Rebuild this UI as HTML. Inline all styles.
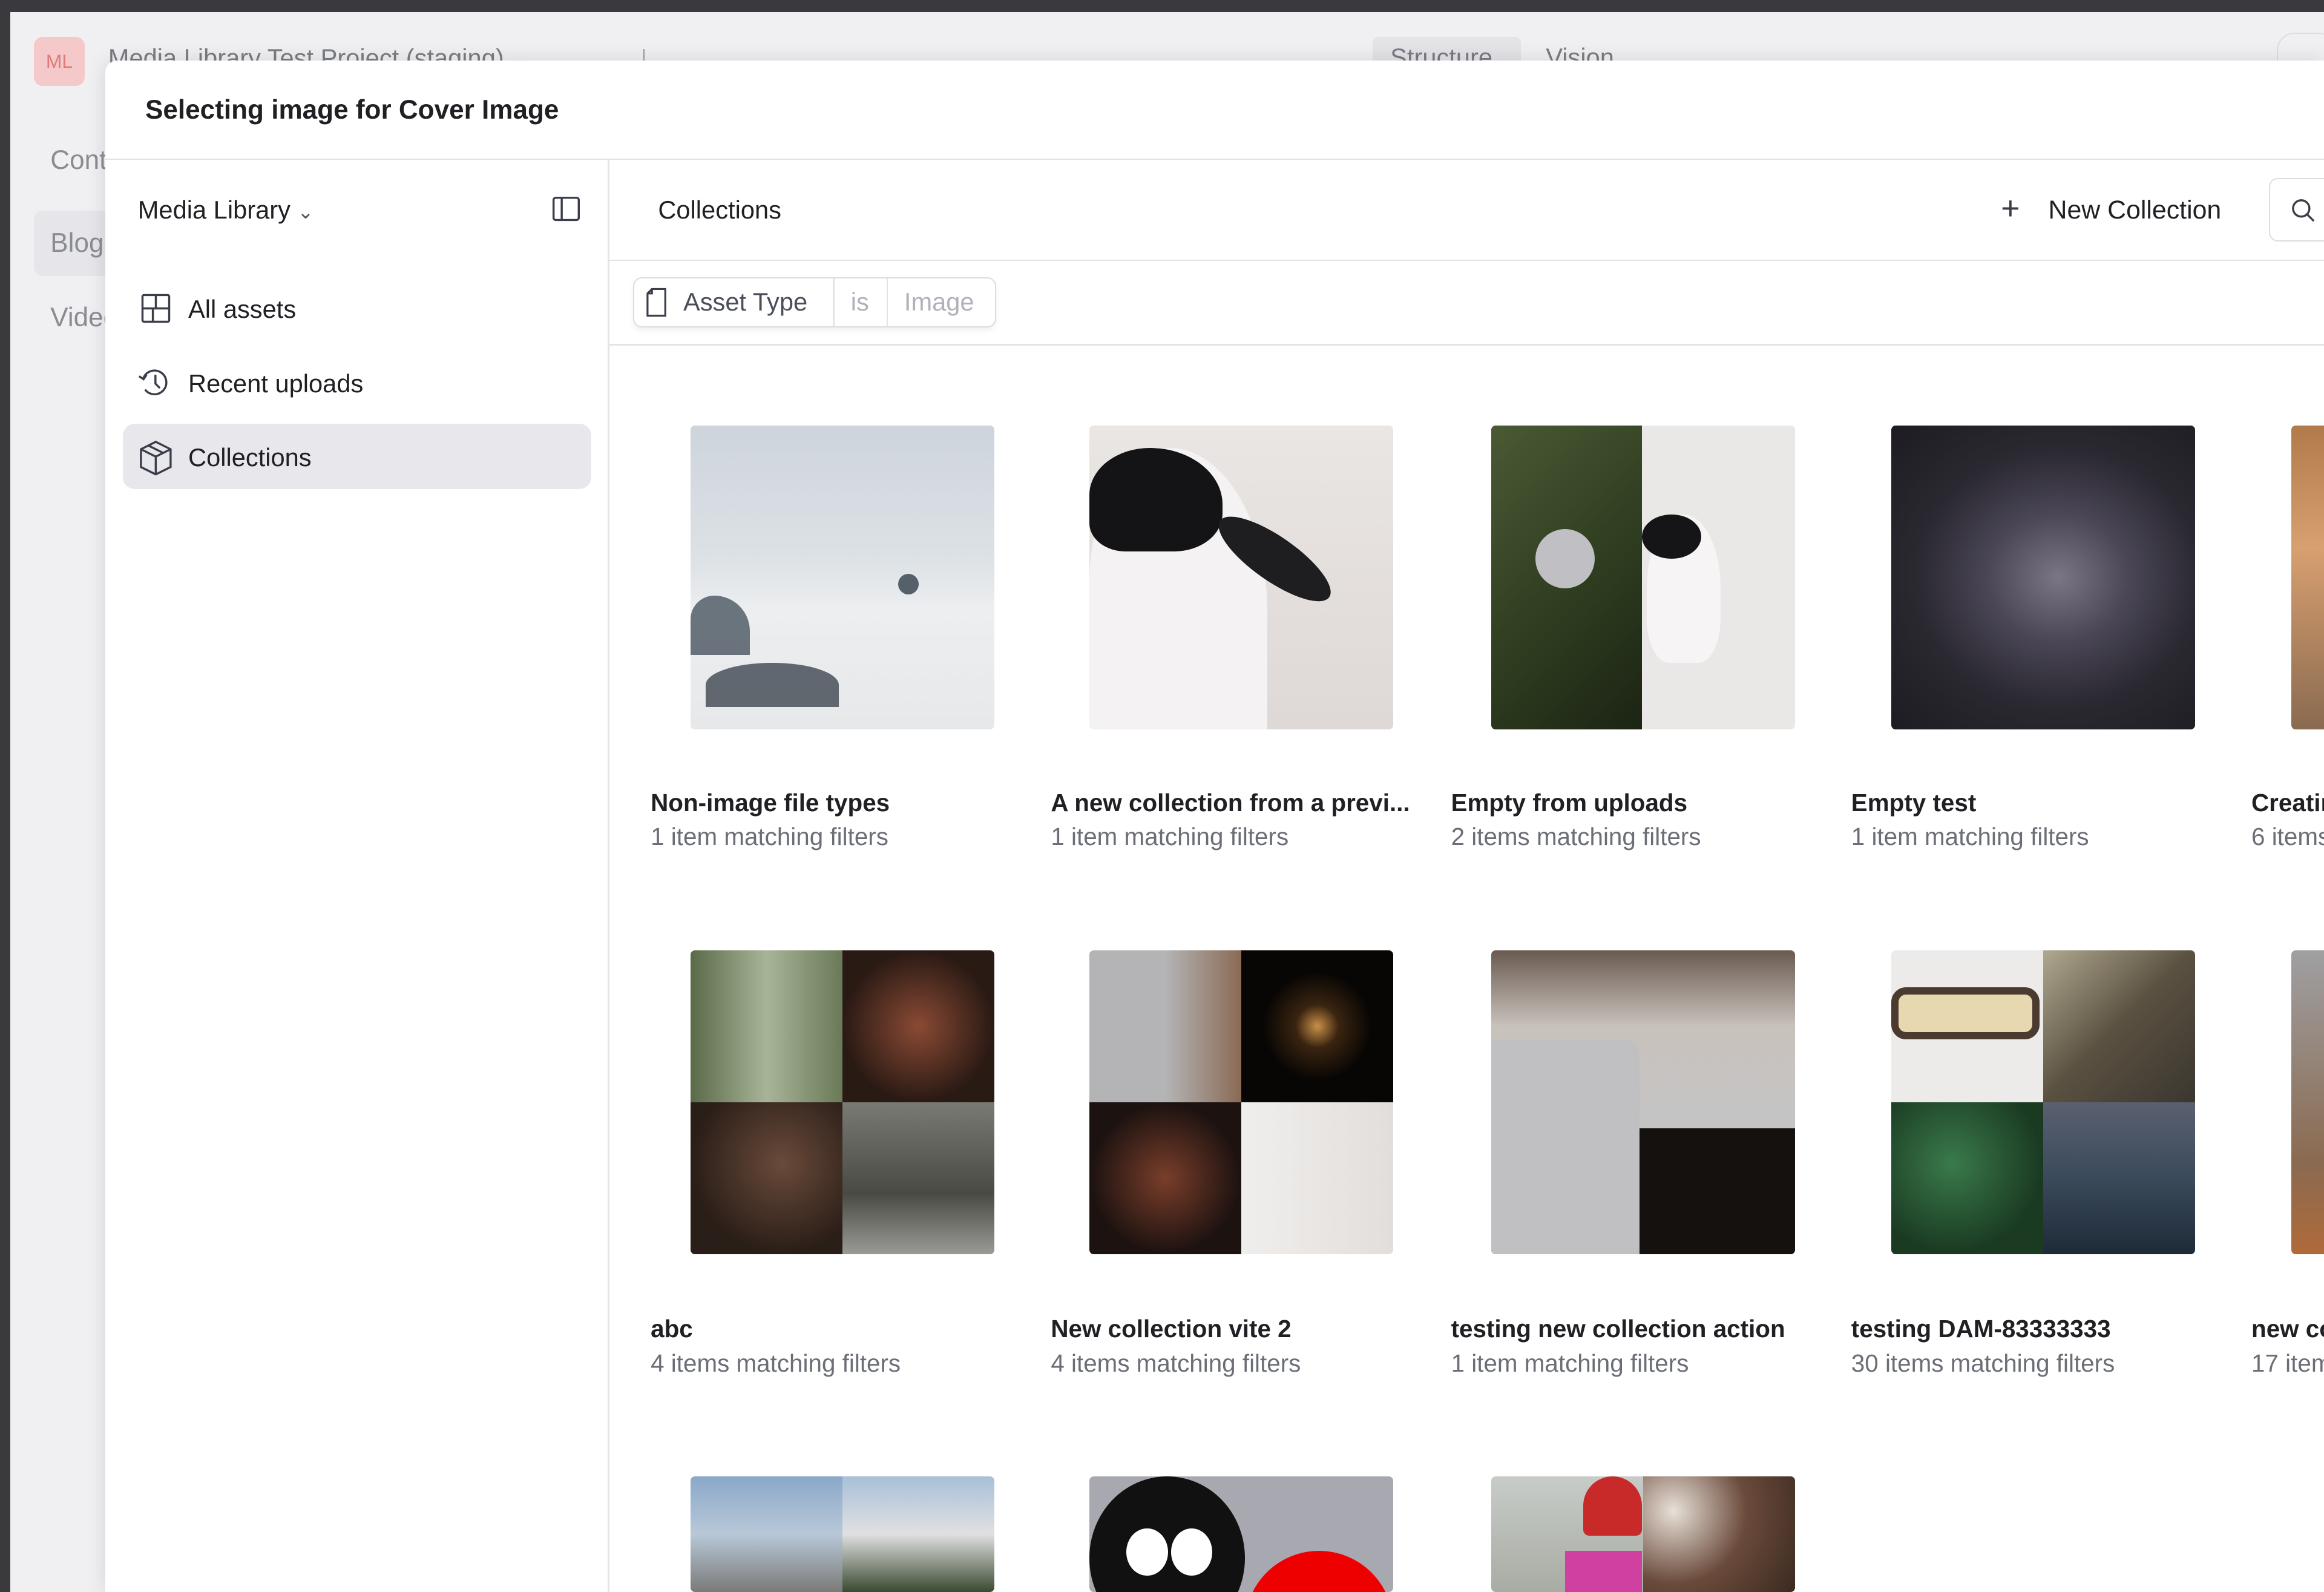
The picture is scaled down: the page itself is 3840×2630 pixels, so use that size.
<!DOCTYPE html>
<html><head><meta charset="utf-8">
<style>
*{box-sizing:border-box;margin:0;padding:0}
html,body{width:3840px;height:2630px;overflow:hidden;background:#f0f0f2}
#w{position:absolute;left:0;top:0;width:1568px;height:1074px;zoom:2.449;font-family:"Liberation Sans",sans-serif;color:#1f2024;overflow:hidden;background:#f0f0f2}
.a{position:absolute}
.t{position:absolute;white-space:nowrap}
.img{position:absolute;width:205px;height:205px;border-radius:3px;overflow:hidden}
.q{position:absolute;width:50%;height:50%}
.ti{position:absolute;font-size:16.5px;font-weight:600;color:#1f2024;white-space:nowrap}
.su{position:absolute;font-size:16.5px;color:#6b6e76;white-space:nowrap}
</style></head><body><div id="w">
<div class="a" style="left:0;top:0;width:1568px;height:8px;background:#3a3a3e"></div>
<div class="a" style="left:0;top:0;width:7px;height:1074px;background:#3a3a3e"></div>
<div class="a" style="left:7px;top:8px;width:1561px;height:1066px;background:#f0f0f2"></div>
<div class="a" style="left:23px;top:25px;width:34px;height:33px;background:#f5c9c9;border-radius:6px;color:#e07a7a;font-size:13px;text-align:center;line-height:33px">ML</div>
<div class="t" style="left:73px;top:29px;font-size:17px;color:#7a7c84">Media Library Test Project (staging) ⌄</div>
<div class="a" style="left:434px;top:33px;width:1px;height:12px;background:#999"></div>
<div class="a" style="left:926px;top:25px;width:100px;height:24px;background:#e4e4e8;border-radius:4px"></div>
<div class="t" style="left:938px;top:29px;font-size:17px;color:#7a7c84">Structure</div>
<div class="t" style="left:1043px;top:29px;font-size:17px;color:#7a7c84">Vision</div>
<div class="a" style="left:1536px;top:22px;width:40px;height:40px;border:1px solid #ddd;border-radius:12px"></div>
<div class="t" style="left:34px;top:98px;font-size:18px;color:#8a8c94">Content</div>
<div class="a" style="left:23px;top:142px;width:60px;height:44px;background:#e6e6ea;border-radius:6px"></div>
<div class="t" style="left:34px;top:154px;font-size:18px;color:#8a8c94">Blog</div>
<div class="t" style="left:34px;top:204px;font-size:18px;color:#8a8c94">Video</div>

<div class="a" style="left:71px;top:41px;width:1497px;height:1033px;background:#fff;border-radius:8px 0 0 0;box-shadow:0 0 14px rgba(0,0,0,.12)"></div>
<div class="t" style="left:98px;top:64px;font-size:18px;font-weight:600;color:#1f2024">Selecting image for Cover Image</div>
<div class="a" style="left:71px;top:107px;width:1497px;height:1px;background:#e3e3e8"></div>
<div class="a" style="left:410px;top:108px;width:1px;height:966px;background:#e3e3e8"></div>
<div class="t" style="left:93px;top:132px;font-size:17px">Media Library <span style="font-size:13px;color:#555">&#8964;</span></div>
<svg class="a" style="left:372px;top:132px" width="20" height="18" viewBox="0 0 20 18"><rect x="1.5" y="1.5" width="17" height="15" rx="1.5" fill="none" stroke="#3a3e4a" stroke-width="1.4"/><line x1="7" y1="1.5" x2="7" y2="16.5" stroke="#3a3e4a" stroke-width="1.4"/></svg>
<svg class="a" style="left:95px;top:198px" width="20" height="20" viewBox="0 0 20 20"><rect x="1" y="1" width="18" height="18" rx="1" fill="none" stroke="#3a3e4a" stroke-width="1.4"/><line x1="1" y1="10" x2="19" y2="10" stroke="#3a3e4a" stroke-width="1.4"/><line x1="10" y1="1" x2="10" y2="10" stroke="#3a3e4a" stroke-width="1.4"/><line x1="8" y1="10" x2="8" y2="19" stroke="#3a3e4a" stroke-width="1.4"/></svg>
<div class="t" style="left:127px;top:199px;font-size:17px">All assets</div>
<svg class="a" style="left:92px;top:246px" width="24" height="24" viewBox="0 0 24 24"><path d="M5 9A8 8 0 1 1 6 17" fill="none" stroke="#3a3e4a" stroke-width="1.4"/><path d="M2 8l3 2 2-3" fill="none" stroke="#3a3e4a" stroke-width="1.4"/><path d="M13 7v6l3 3" fill="none" stroke="#3a3e4a" stroke-width="1.4"/></svg>
<div class="t" style="left:127px;top:249px;font-size:17px">Recent uploads</div>
<div class="a" style="left:83px;top:286px;width:316px;height:44px;background:#e8e8ec;border-radius:8px"></div>
<svg class="a" style="left:93px;top:296px" width="24" height="26" viewBox="0 0 24 26"><path d="M12 2L22 7V19L12 24L2 19V7Z M2 7L12 12L22 7 M12 12V24 M7 4.5L17 9.5" fill="none" stroke="#3a3e4a" stroke-width="1.4"/></svg>
<div class="t" style="left:127px;top:299px;font-size:17px">Collections</div>

<div class="t" style="left:444px;top:132px;font-size:17px">Collections</div>
<div class="t" style="left:1350px;top:128px;font-size:22px;color:#3a3e4a;font-weight:300">+</div>
<div class="t" style="left:1382px;top:132px;font-size:17.5px">New Collection</div>
<div class="a" style="left:1531px;top:120px;width:60px;height:43px;border:1px solid #dcdce2;border-radius:6px"></div>
<svg class="a" style="left:1545px;top:133px" width="18" height="18" viewBox="0 0 18 18"><circle cx="7.5" cy="7.5" r="5.5" fill="none" stroke="#3a3e4a" stroke-width="1.4"/><line x1="11.5" y1="11.5" x2="16" y2="16" stroke="#3a3e4a" stroke-width="1.4"/></svg>
<div class="a" style="left:411px;top:175px;width:1157px;height:1px;background:#e3e3e8"></div>
<div class="a" style="left:427px;top:187px;width:245px;height:34px;border:1px solid #dcdce2;border-radius:6px;box-shadow:0 2px 4px rgba(0,0,0,.06)"></div>
<div class="a" style="left:562px;top:188px;width:1px;height:32px;background:#e3e3e8"></div>
<div class="a" style="left:598px;top:188px;width:1px;height:32px;background:#e3e3e8"></div>
<svg class="a" style="left:435px;top:194px" width="16" height="20" viewBox="0 0 16 20"><path d="M5 1H14V19H2V4Z M5 1V4H2" fill="none" stroke="#3a3e4a" stroke-width="1.3"/></svg>
<div class="t" style="left:461px;top:194px;font-size:17px;color:#4a4e5a">Asset Type</div>
<div class="t" style="left:574px;top:194px;font-size:17px;color:#b0b2ba">is</div>
<div class="t" style="left:610px;top:194px;font-size:17px;color:#b0b2ba">Image</div>
<div class="a" style="left:411px;top:232px;width:1157px;height:1px;background:#e3e3e8"></div>

<!-- row1 -->
<div class="img" style="left:466px;top:287px;background:linear-gradient(180deg,#cdd4db 0%,#dde2e6 45%,#eceef0 60%,#e6e8ea 100%)">
<div class="a" style="left:0;top:115px;width:40px;height:40px;background:#4a5560;border-radius:40% 60% 0 0;opacity:.8"></div>
<div class="a" style="left:10px;top:160px;width:90px;height:30px;background:#3e4650;border-radius:50% 50% 0 0;opacity:.8"></div>
<div class="a" style="left:140px;top:100px;width:14px;height:14px;background:#55606a;border-radius:50%"></div></div>
<div class="img" style="left:735px;top:287px;background:linear-gradient(180deg,#eae6e4,#ded8d6)">
<div class="a" style="left:0;top:15px;width:120px;height:200px;background:#f4f2f2;border-radius:45% 55% 0 0"></div>
<div class="a" style="left:0;top:15px;width:90px;height:70px;background:#141416;border-radius:50% 60% 40% 30%"></div>
<div class="a" style="left:80px;top:75px;width:90px;height:30px;background:#1e1e20;border-radius:50%;transform:rotate(35deg)"></div></div>
<div class="img" style="left:1006px;top:287px;background:#eae8e6">
<div class="a" style="left:0;top:0;width:102px;height:205px;background:linear-gradient(135deg,#4a5a34,#2c3a1e 60%,#1c2414)"></div>
<div class="a" style="left:30px;top:70px;width:40px;height:40px;background:#c0c0c4;border-radius:50%"></div>
<div class="a" style="left:105px;top:60px;width:50px;height:100px;background:#f6f4f4;border-radius:50% 50% 30% 30%"></div>
<div class="a" style="left:102px;top:60px;width:40px;height:30px;background:#151517;border-radius:50%"></div></div>
<div class="img" style="left:1276px;top:287px;background:radial-gradient(ellipse at 55% 50%,#7a7686 0%,#4a4656 30%,#2a2830 60%,#1e1c22 100%)"></div>
<div class="img" style="left:1546px;top:287px;background:linear-gradient(180deg,#b07a4a,#d8a070 40%,#8a6a50)"></div>
<div class="ti" style="left:439px;top:532px">Non-image file types</div><div class="su" style="left:439px;top:555px">1 item matching filters</div>
<div class="ti" style="left:709px;top:532px">A new collection from a previ...</div><div class="su" style="left:709px;top:555px">1 item matching filters</div>
<div class="ti" style="left:979px;top:532px">Empty from uploads</div><div class="su" style="left:979px;top:555px">2 items matching filters</div>
<div class="ti" style="left:1249px;top:532px">Empty test</div><div class="su" style="left:1249px;top:555px">1 item matching filters</div>
<div class="ti" style="left:1519px;top:532px">Creating</div><div class="su" style="left:1519px;top:555px">6 items</div>

<!-- row2 -->
<div class="img" style="left:466px;top:641px">
<div class="q" style="left:0;top:0;background:linear-gradient(90deg,#5a6a48,#a8b498,#6a7a58)"></div>
<div class="q" style="left:50%;top:0;background:radial-gradient(circle at 50% 50%,#8a4a34,#2a1a14 70%)"></div>
<div class="q" style="left:0;top:50%;background:radial-gradient(circle at 60% 40%,#6a4a3a,#2a1e18 70%)"></div>
<div class="q" style="left:50%;top:50%;background:linear-gradient(180deg,#7a7a74,#4a4a44 60%,#9a9a96)"></div></div>
<div class="img" style="left:735px;top:641px">
<div class="q" style="left:0;top:0;background:linear-gradient(90deg,#b4b4b6 50%,#8a6a54)"></div>
<div class="q" style="left:50%;top:0;background:radial-gradient(ellipse at 50% 50%,#c89048 0%,#3a2410 20%,#080604 50%)"></div>
<div class="q" style="left:0;top:50%;background:radial-gradient(circle at 50% 50%,#7a3e2a,#1c1210 70%)"></div>
<div class="q" style="left:50%;top:50%;background:linear-gradient(90deg,#f0eeec,#e2dedc)"></div></div>
<div class="img" style="left:1006px;top:641px;background:linear-gradient(180deg,#6a5a50 0%,#c8c2bc 25%,#c4c4c6 60%,#1a1614 100%)">
<div class="a" style="left:0;top:60px;width:100px;height:145px;background:#c0c0c2;border-radius:0 10px 0 0"></div>
<div class="a" style="left:100px;top:120px;width:105px;height:85px;background:#14110f"></div></div>
<div class="img" style="left:1276px;top:641px">
<div class="q" style="left:0;top:0;background:#ecebea"></div>
<div class="a" style="left:0;top:25px;width:100px;height:35px;border:5px solid #4a3a30;border-radius:10px;background:#e8d8b0"></div>
<div class="q" style="left:50%;top:0;background:linear-gradient(135deg,#b0a890,#5a5040 50%,#3a3630)"></div>
<div class="q" style="left:0;top:50%;background:radial-gradient(circle at 40% 40%,#3a7a4a,#1a3a22 70%)"></div>
<div class="q" style="left:50%;top:50%;background:linear-gradient(180deg,#5a6070,#3a4a5a 50%,#1e2a38)"></div></div>
<div class="img" style="left:1546px;top:641px;background:linear-gradient(180deg,#a0a0a2,#8a6a50 70%,#b06a3a)"></div>
<div class="ti" style="left:439px;top:887px">abc</div><div class="su" style="left:439px;top:910px">4 items matching filters</div>
<div class="ti" style="left:709px;top:887px">New collection vite 2</div><div class="su" style="left:709px;top:910px">4 items matching filters</div>
<div class="ti" style="left:979px;top:887px">testing new collection action</div><div class="su" style="left:979px;top:910px">1 item matching filters</div>
<div class="ti" style="left:1249px;top:887px">testing DAM-83333333</div><div class="su" style="left:1249px;top:910px">30 items matching filters</div>
<div class="ti" style="left:1519px;top:887px">new coll</div><div class="su" style="left:1519px;top:910px">17 items</div>

<!-- row3 -->
<div class="img" style="left:466px;top:996px;height:78px">
<div class="q" style="left:0;top:0;height:100%;background:linear-gradient(180deg,#8aa8c8 0%,#b8c8d8 50%,#7a7a78 100%)"></div>
<div class="q" style="left:50%;top:0;height:100%;background:linear-gradient(180deg,#a8c0d8 0%,#e0e0e0 50%,#3a4a30 100%)"></div></div>
<div class="img" style="left:735px;top:996px;height:78px;background:#a8a8b0">
<div class="a" style="left:0;top:0;width:105px;height:110px;background:#111;border-radius:50%"></div>
<div class="a" style="left:25px;top:35px;width:28px;height:32px;background:#fff;border-radius:50%"></div>
<div class="a" style="left:55px;top:35px;width:28px;height:32px;background:#fff;border-radius:50%"></div>
<div class="a" style="left:105px;top:50px;width:100px;height:100px;background:#ee0000;border-radius:50%"></div></div>
<div class="img" style="left:1006px;top:996px;height:78px">
<div class="q" style="left:0;top:0;height:100%;background:linear-gradient(180deg,#c8ccc8,#a8aca4)"></div>
<div class="a" style="left:62px;top:0;width:40px;height:40px;background:#c82a2a;border-radius:50% 50% 10% 10%"></div>
<div class="a" style="left:50px;top:50px;width:52px;height:40px;background:#d040a0"></div>
<div class="q" style="left:50%;top:0;height:100%;background:radial-gradient(circle at 20% 30%,#e8e0d8,#6a4a3a 50%,#3a2a20)"></div></div>
</div></body></html>
